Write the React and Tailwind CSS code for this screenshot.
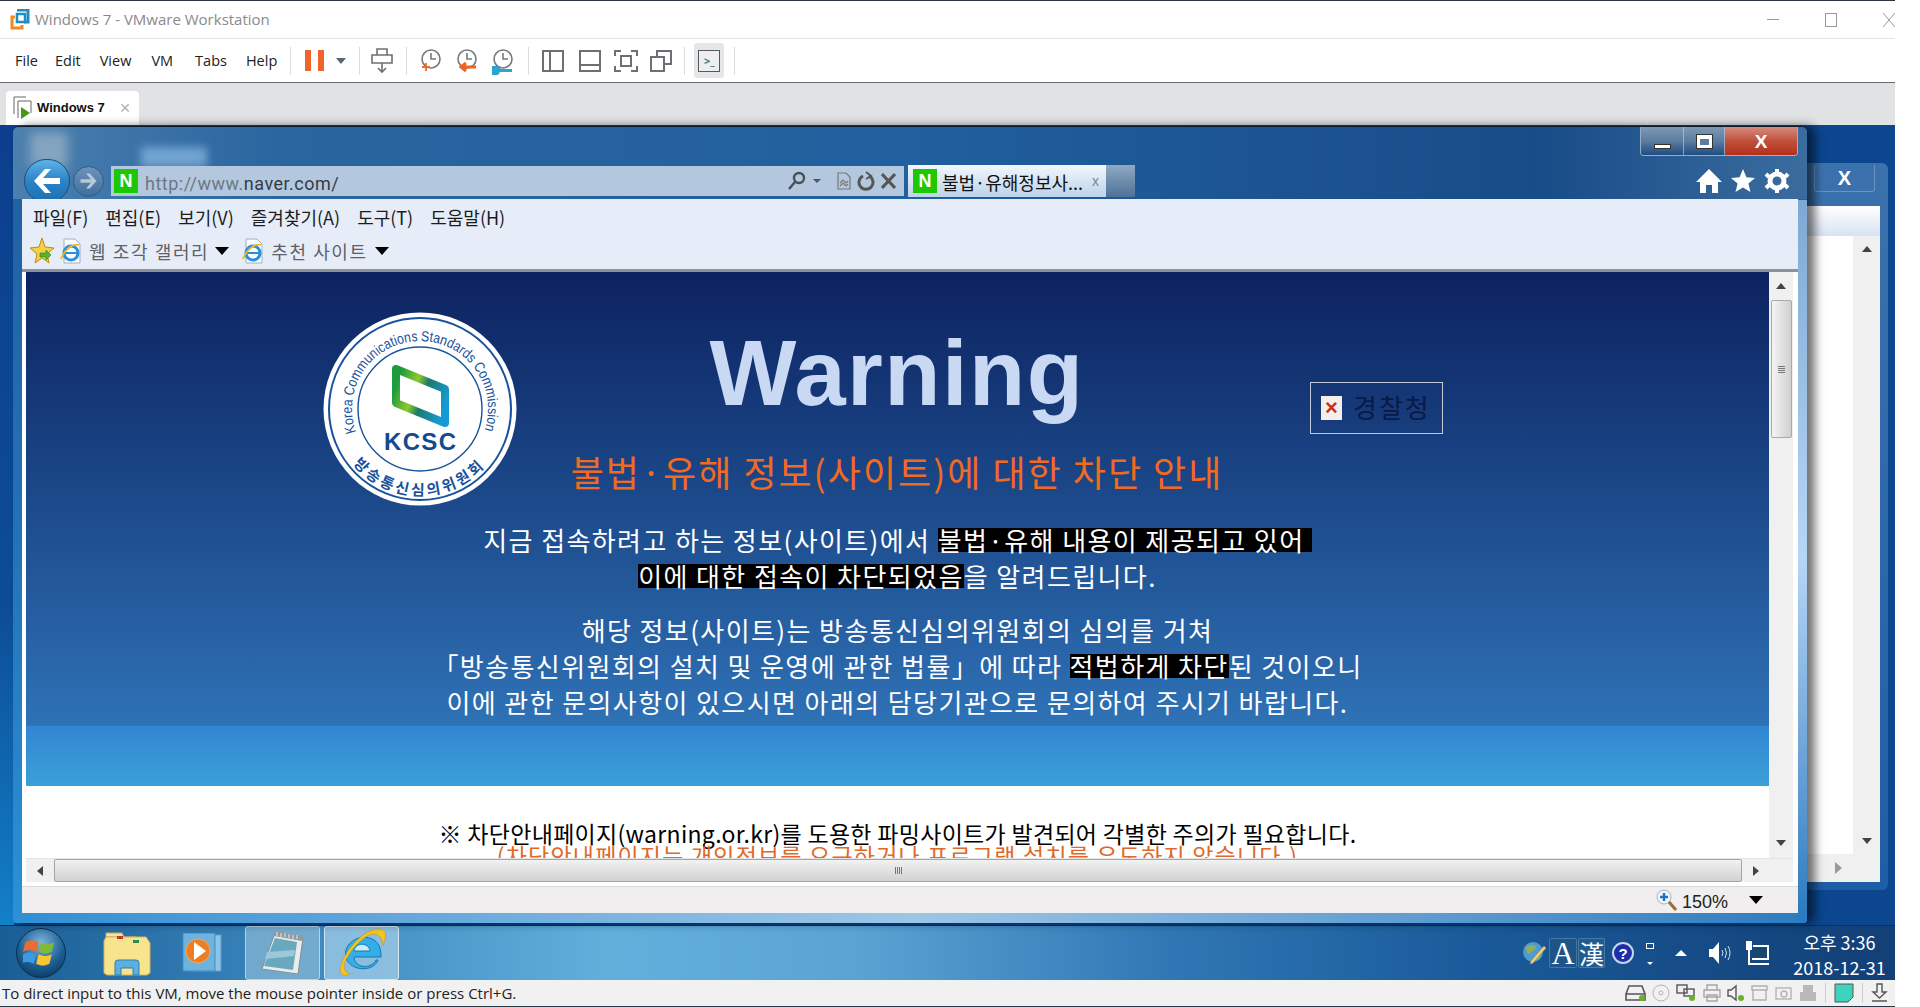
import React from "react";

const KR = "font-['Noto_Sans_CJK_KR','Noto_Sans',sans-serif]";

// ── Small drawn icons ─────────────────────────────────────────────────────────

function VmwareLogo() {
  return (
    <svg width="20" height="21" viewBox="0 0 20 21" fill="none">
      <path d="M7 1h11v12h-4" stroke="#1d8fc4" strokeWidth="3" />
      <rect x="7" y="5" width="8" height="8" stroke="#1d8fc4" strokeWidth="2.500" />
      <path d="M12 16v3H2V8h3" stroke="#ef8a1d" strokeWidth="3" />
    </svg>
  );
}

function Separator() {
  return <div className="h-[28px] w-px bg-[#dcdcdc]" />;
}

function SnapshotIcon({ kind }) {
  return (
    <svg width="24" height="30" viewBox="0 0 24 30" fill="none">
      <circle cx="13" cy="13" r="9" stroke="#77797c" strokeWidth="1.6" />
      <path d="M13 7v6h5" stroke="#77797c" strokeWidth="1.6" />
      {kind === "add" && <path d="M4 21h8M8 17v8" stroke="#ef6c2d" strokeWidth="1.8" />}
      {kind === "back" && <path d="M22 21H8m4-4l-5 4 5 4" stroke="#ef6423" strokeWidth="3" fill="#ef6423" />}
      {kind === "manage" && <path d="M2 20h6l3 3h11v3H10l-2 3H2z" fill="#2aa5cf" />}
    </svg>
  );
}

function LayoutIcon({ kind }) {
  if (kind === "side") {
    return (
      <svg width="22" height="22" fill="none" stroke="#6d6f72" strokeWidth="2">
        <rect x="1" y="1" width="20" height="20" />
        <path d="M8 1v20" />
      </svg>
    );
  }
  if (kind === "bottom") {
    return (
      <svg width="22" height="22" fill="none" stroke="#6d6f72" strokeWidth="2">
        <rect x="1" y="1" width="20" height="20" />
        <path d="M1 15h20" />
      </svg>
    );
  }
  if (kind === "full") {
    return (
      <svg width="24" height="22" fill="none" stroke="#6d6f72" strokeWidth="2">
        <path d="M1 6V1h6M17 1h6v5M1 16v5h6M17 21h6v-5" />
        <rect x="7" y="6" width="10" height="10" />
      </svg>
    );
  }
  return (
    <svg width="22" height="22" fill="none" stroke="#6d6f72" strokeWidth="2">
      <rect x="1" y="7" width="13" height="14" />
      <path d="M7 7V1h14v13h-7" />
    </svg>
  );
}

function NaverIcon({ size = 24 }) {
  return (
    <div
      className="flex shrink-0 items-center justify-center bg-[#1ec800] font-['Liberation_Sans',sans-serif] font-bold text-white"
      style={{ width: size, height: size, fontSize: size * 0.75 }}
    >
      N
    </div>
  );
}

function IeDoc() {
  return (
    <svg width="24" height="26" viewBox="0 0 24 26">
      <path d="M5 1h11l5 5v19H5z" fill="#f8fbff" stroke="#a4aebd" />
      <circle cx="12" cy="15" r="7" fill="none" stroke="#2d8ed8" strokeWidth="3" />
      <path d="M6 15h13" stroke="#2d8ed8" strokeWidth="2" />
      <path d="M2 21C6 11 14 5 20 7" fill="none" stroke="#eeb71f" strokeWidth="1.8" />
    </svg>
  );
}

function FavStar() {
  return (
    <svg width="24" height="28" viewBox="0 0 24 28">
      <path d="M12 1l3 9 9 1-7 6 2 9-7-5-7 5 2-9-7-6 9-1z" fill="#f6d145" stroke="#b98d1c" />
      <path d="M10 16h6v-3l5 5-5 5v-3h-6z" fill="#58b52b" stroke="#2f7d12" strokeWidth=".6" />
    </svg>
  );
}

function Caret() {
  return <div className="h-0 w-0 border-x-[7px] border-t-[8px] border-x-transparent border-t-black" />;
}

function KcscLogo() {
  return (
    <svg width="194" height="194" viewBox="0 0 194 194" className="shrink-0">
      <defs>
        <linearGradient id="kcscMark" x1="0" x2="1" y1="0.3" y2="0.7">
          <stop offset="0" stopColor="#1f9a3c" />
          <stop offset="0.35" stopColor="#8ccb2e" />
          <stop offset="0.55" stopColor="#1c7a6a" />
          <stop offset="1" stopColor="#169ad6" />
        </linearGradient>
        <path id="kcscTop" d="M33 120A68 68 0 1 1 161 120" />
        <path id="kcscBottom" d="M30 152A87 87 0 0 0 164 152" />
      </defs>
      <circle cx="97" cy="97" r="96.500" fill="#fff" />
      <circle cx="97" cy="97" r="91" fill="none" stroke="#17529c" strokeWidth="2" />
      <circle cx="97" cy="97" r="62" fill="none" stroke="#17529c" strokeWidth="1.4" />
      <path d="M73 57L122 77V111L73 91Z" fill="none" stroke="url(#kcscMark)" strokeWidth="8" strokeLinejoin="round" />
      <text x="97" y="138" textAnchor="middle" fontFamily="Liberation Sans" fontWeight="700" fontSize="24" fill="#124a92" textLength="72">
        KCSC
      </text>
      <text fontFamily="Liberation Sans" fontSize="14.5" fill="#17529c">
        <textPath href="#kcscTop" textLength="258" lengthAdjust="spacingAndGlyphs">Korea Communications Standards Commission</textPath>
      </text>
      <text fontFamily="Noto Sans CJK KR" fontWeight="700" fontSize="15" fill="#17529c">
        <textPath href="#kcscBottom" textLength="148">방송통신심의위원회</textPath>
      </text>
    </svg>
  );
}

// ── IE window chrome ──────────────────────────────────────────────────────────

function WindowButtons() {
  return (
    <div className="absolute right-[9px] top-0 flex h-[29px] overflow-hidden rounded-b-[4px] border border-t-0 border-[#c4d0de]/70 text-white">
      <div className="flex w-[43px] items-end justify-center border-r border-[#c4d0de]/60 bg-gradient-to-b from-[#7f98b4] via-[#5b7da0] to-[#1f4d80] pb-[6px]">
        <div className="h-[5px] w-[17px] border border-[#333] bg-white" />
      </div>
      <div className="flex w-[41px] items-center justify-center border-r border-[#c4d0de]/60 bg-gradient-to-b from-[#7f98b4] via-[#5b7da0] to-[#1f4d80]">
        <div className="h-[13px] w-[15px] border-[3px] border-t-[4px] border-white bg-[#5b7da0] outline outline-[#333]" />
      </div>
      <div className="flex w-[72px] items-center justify-center bg-gradient-to-b from-[#d48b7d] via-[#c1503c] to-[#b32f1c] font-['Liberation_Sans',sans-serif] text-[19px] font-bold leading-none">
        X
      </div>
    </div>
  );
}

function AddressBar() {
  return (
    <div className="flex items-center pl-[11px] pt-[8px]">
      {/* back / forward */}
      <div className="flex h-[44px] w-[46px] items-center justify-center rounded-full border border-[#1d4f7e] bg-gradient-to-b from-[#5db2e6] via-[#2c83c6] to-[#1c6fb4]">
        <svg width="30" height="26" viewBox="0 0 30 26"><path d="M13 1L2 13l11 12h6l-8-9h17v-6H11l8-9z" fill="#fff" /></svg>
      </div>
      <div className="ml-[3px] flex h-[31px] w-[31px] items-center justify-center rounded-full border border-[#2d5d8d] bg-gradient-to-b from-[#6f93b9] to-[#3e6e9e]">
        <svg width="19" height="16" viewBox="0 0 30 26"><path d="M17 1l11 12-11 12h-6l8-9H2v-6h17l-8-9z" fill="#b9c9da" /></svg>
      </div>
      <div className="ml-[7px] flex h-[30px] w-[793px] items-center bg-[#b3c8df] pl-[3px] pr-[8px]">
        <NaverIcon />
        <span className="ml-[7px] pt-[4px] font-['Roboto',sans-serif] text-[18px] tracking-[0.5px] text-[#6d7885]">
          http://www.<span className="text-[#333b45]">naver.com/</span>
        </span>
        <div className="ml-auto flex items-center gap-[6px]">
          <svg width="20" height="20" viewBox="0 0 20 20" fill="none" stroke="#4a4f55" strokeWidth="2.400">
            <circle cx="12" cy="7" r="5" />
            <path d="M8 11l-6 7" />
          </svg>
          <div className="mr-[10px] h-0 w-0 border-x-[4px] border-t-[4px] border-x-transparent border-t-[#555]" />
          <svg width="14" height="18" viewBox="0 0 14 18" fill="none" stroke="#777" strokeWidth="1.2">
            <path d="M1 1h8l4 4v12H1zM3 11l3-3 3 3 2-2M3 14l3-3 3 3 2-2" />
          </svg>
          <svg width="18" height="20" viewBox="0 0 18 20" fill="none" stroke="#555" strokeWidth="3">
            <path d="M12 5a7 7 0 1 1-6 0" />
            <path d="M9 1l5 4-5 3" strokeWidth="2" />
          </svg>
          <svg width="15" height="16" viewBox="0 0 15 16" stroke="#555" strokeWidth="3"><path d="M1 1l13 14M14 1L1 15" /></svg>
        </div>
      </div>
      {/* tab */}
      <div className={`ml-[4px] flex h-[32px] w-[198px] items-center bg-gradient-to-b from-[#f2f7fc] to-[#bcd3ea] pl-[5px] pr-[7px] text-[18px] text-[#111] ${KR}`}>
        <NaverIcon />
        <span className="ml-[5px] whitespace-nowrap pt-[2px] leading-none">불법·유해정보사...</span>
        <span className="ml-auto font-['Liberation_Sans',sans-serif] text-[14px] text-[#7a8797]">x</span>
      </div>
      <div className="h-[32px] w-[29px] bg-gradient-to-b from-[#8fa9c4] to-[#4f7297]" />
      {/* home, favourites, tools */}
      <div className="ml-auto mr-[17px] flex items-center gap-[9px]">
        <svg width="26" height="24" viewBox="0 0 26 24" fill="#fff">
          <path d="M13 0L0 13h4v11h6v-8h6v8h6V13h4z" />
        </svg>
        <svg width="24" height="24" viewBox="0 0 24 24" fill="#fff">
          <path d="M12 0l3.4 8.2 8.6.7-6.6 5.7 2.1 8.4L12 18.500l-7.500 4.500 2.100-8.400L0 8.900l8.600-.7z" />
        </svg>
        <svg width="26" height="24" viewBox="0 0 26 24" fill="none" stroke="#fff" strokeWidth="5">
          <circle cx="13" cy="12" r="7" />
          <path d="M13 0v4M13 20v4M2 5l3 3M21 16l3 3M2 19l3-3M21 8l3-3" strokeWidth="4" />
        </svg>
      </div>
    </div>
  );
}

function BrowserMenus() {
  return (
    <div className={`h-[73px] border-b-[3px] border-[#8e9196] bg-[#e6edf8] text-[18px] text-[#1c1c1c] ${KR}`}>
      <div className="flex h-[37px] items-center gap-[17px] pl-[11px]">
        <span>파일(F)</span>
        <span>편집(E)</span>
        <span>보기(V)</span>
        <span>즐겨찾기(A)</span>
        <span>도구(T)</span>
        <span>도움말(H)</span>
      </div>
      <div className="flex h-[30px] items-center pl-[8px] text-[#5e6166]">
        <FavStar />
        <div className="ml-[5px]"><IeDoc /></div>
        <span className="ml-[6px] tracking-[1.6px]">웹 조각 갤러리</span>
        <div className="ml-[6px]"><Caret /></div>
        <div className="ml-[12px]"><IeDoc /></div>
        <span className="ml-[6px] tracking-[1.6px]">추천 사이트</span>
        <div className="ml-[7px]"><Caret /></div>
      </div>
    </div>
  );
}

function ArrowUp() {
  return <div className="h-0 w-0 border-x-[5px] border-b-[6px] border-x-transparent border-b-[#444]" />;
}

function ArrowDown() {
  return <div className="h-0 w-0 border-x-[5px] border-t-[6px] border-x-transparent border-t-[#444]" />;
}

function VScrollbar() {
  return (
    <div className="flex w-[24px] shrink-0 flex-col items-center bg-[#f0f0f0]">
      <div className="flex h-[28px] items-center"><ArrowUp /></div>
      <div className="flex h-[138px] w-[21px] items-center justify-center rounded-[2px] border border-[#a9a9a9] bg-gradient-to-r from-[#f4f4f4] to-[#cfd0d2]">
        <div className="h-[7px] w-[7px] border-y-[3px] border-double border-[#777]" />
      </div>
      <div className="mb-[12px] mt-auto"><ArrowDown /></div>
    </div>
  );
}

function HScrollbar() {
  return (
    <div className="flex h-[24px] shrink-0 items-center border-t border-[#e4e4e4] bg-[#f0f0f0]">
      <div className="flex w-[28px] justify-center">
        <div className="h-0 w-0 border-y-[5px] border-r-[6px] border-y-transparent border-r-[#444]" />
      </div>
      <div className="flex h-[23px] w-[1688px] items-center justify-center rounded-[2px] border border-[#a5a5a5] bg-gradient-to-b from-[#f2f2f2] to-[#d0d1d3]">
        <div className="h-[7px] w-[7px] border-x-[3px] border-double border-[#777]" />
      </div>
      <div className="flex w-[27px] justify-center">
        <div className="h-0 w-0 border-y-[5px] border-l-[6px] border-y-transparent border-l-[#444]" />
      </div>
    </div>
  );
}

// ── Warning page ──────────────────────────────────────────────────────────────

function Mark({ children }) {
  return <span className="inline-block h-[24px] bg-black leading-[24px]">{children}</span>;
}

function WarningPage() {
  return (
    <div className={`h-[586px] min-w-0 flex-1 overflow-hidden bg-white ${KR}`}>
      <div className="h-[454px] bg-gradient-to-b from-[#0d2260] to-[#2f72b6] pt-[40px]">
        <div className="flex items-start pl-[297px]">
          <KcscLogo />
          <div className="w-[760px] shrink-0 text-center">
            <div className="mt-[7px] font-['Liberation_Sans',sans-serif] text-[92px] font-bold leading-[108px] tracking-[1.5px] text-[#c9d8f3]">
              Warning
            </div>
            <div className="mt-[19px] text-[36px] leading-[50px] tracking-[2px] text-[#f26a1f]">
              불법·유해 정보(사이트)에 대한 차단 안내
            </div>
          </div>
          <div className="ml-[33px] mt-[70px] flex h-[52px] w-[133px] items-center border border-[#c3cbdb] pl-[10px]">
            <div className="flex h-[24px] w-[21px] items-center justify-center bg-[#f3efef] font-['Liberation_Sans',sans-serif] text-[22px] font-bold leading-none text-[#d52a1f]">
              ×
            </div>
            <span className="ml-[11px] pb-[3px] text-[26px] leading-none tracking-[2px] text-[#0a1a45]">경찰청</span>
          </div>
        </div>
        <div className="mt-[16px] text-center text-[26px] leading-[36px] tracking-[1.4px] text-white">
          <p>
            지금 접속하려고 하는 정보(사이트)에서 <Mark>불법·유해 내용이 제공되고 있어&nbsp;</Mark>
          </p>
          <p>
            <Mark>이에 대한 접속이 차단되었음</Mark>을 알려드립니다.
          </p>
          <p className="mt-[18px]">해당 정보(사이트)는 방송통신심의위원회의 심의를 거쳐</p>
          <p>
            「방송통신위원회의 설치 및 운영에 관한 법률」에 따라 <Mark>적법하게 차단</Mark>된 것이오니
          </p>
          <p>이에 관한 문의사항이 있으시면 아래의 담당기관으로 문의하여 주시기 바랍니다.</p>
        </div>
      </div>
      <div className="h-[60px] bg-gradient-to-b from-[#3386d2] to-[#3ba0d7]" />
      <div className="pt-[32px] text-center text-[23px] leading-[30px] tracking-[0.3px]">
        <p className="text-black">※ 차단안내페이지(warning.or.kr)를 도용한 파밍사이트가 발견되어 각별한 주의가 필요합니다.</p>
        <p className="mt-[-8px] tracking-[1.2px] text-[#e0692a]">(차단안내페이지는 개인정보를 요구하거나 프로그램 설치를 유도하지 않습니다.)</p>
      </div>
    </div>
  );
}

function IeWindow() {
  return (
    <div className="absolute left-[13px] top-[1px] flex h-[797px] w-[1794px] flex-col overflow-hidden rounded-t-[6px] rounded-b-[4px] border-t border-[#0a1a30] bg-gradient-to-b from-[#1f5f9f] via-[#2471b5] to-[#2a92d8] shadow-[8px_0_10px_rgba(0,0,0,0.55)]">
      <div className="relative h-[72px] shrink-0 bg-[linear-gradient(90deg,#4b7fae_0%,#2a659f_15%,#215f9e_50%,#184c88_85%,#3a6c9e_100%)]">
        {/* blurred windows showing through the glass */}
        <div className="absolute left-[17px] top-[5px] h-[36px] w-[38px] bg-[#c4cfd6]/50 blur-[6px]" />
        <div className="absolute left-[128px] top-[20px] h-[20px] w-[66px] bg-[#7fb0dc]/80 blur-[4px]" />
        <WindowButtons />
        <div className="relative pt-[24px]">
          <AddressBar />
        </div>
      </div>
      <div className="relative mx-[9px] flex flex-1 flex-col bg-white">
        <BrowserMenus />
        <div className="flex flex-col pl-[4px] pr-[5px]">
          <div className="flex">
            <WarningPage />
            <VScrollbar />
          </div>
          <HScrollbar />
        </div>
        <div className="mt-[4px] flex h-[27px] items-center justify-end border-t border-[#d8d8d8] bg-[#f0eeee] pr-[2px] font-['Liberation_Sans',sans-serif] text-[18px] text-[#222]">
          <svg width="22" height="23" viewBox="0 0 22 23" fill="none">
            <circle cx="8" cy="8" r="7" fill="#eef5fc" stroke="#9db4c9" />
            <path d="M4 8h8M8 4v8" stroke="#1f74bb" strokeWidth="2.400" />
            <path d="M13 13l7 8" stroke="#a26a2c" strokeWidth="3" />
          </svg>
          <span className="ml-[4px] w-[67px] pt-[4px]">150%</span>
          <div className="mr-[33px]"><Caret /></div>
        </div>
      </div>
      {/* pale right edge of the frame */}
      <div className="absolute bottom-[10px] right-0 top-[73px] w-[9px] bg-gradient-to-b from-[#7ea9d4] via-[#b7d6f6] to-[#2b7cc0]" />
      <div className="h-[10px] shrink-0 bg-gradient-to-r from-[#2d8fd5] via-[#9cc6e6] to-[#2b7cc0]" />
    </div>
  );
}

function BackWindow() {
  return (
    <div className="absolute left-[1700px] top-[38px] flex h-[727px] w-[188px] flex-col rounded-[6px] bg-gradient-to-b from-[#3b72ad] to-[#1e5ea6]">
      <div className="flex h-[43px] shrink-0 justify-end pr-[13px] pt-[2px]">
        <div className="flex h-[27px] w-[61px] items-center justify-center rounded-b-[3px] border border-t-0 border-[#9ab5d1]/50 font-['Liberation_Sans',sans-serif] text-[20px] font-bold text-white">
          X
        </div>
      </div>
      <div className="mb-[8px] ml-[100px] mr-[8px] flex flex-1 flex-col bg-white">
        <div className="h-[30px] bg-gradient-to-b from-white to-[#d8e3f2]" />
        <div className="flex flex-1 justify-end">
          <div className="flex w-[27px] flex-col items-center justify-between bg-[#f0f0f0] py-[10px]">
            <ArrowUp />
            <ArrowDown />
          </div>
        </div>
        <div className="flex h-[28px] items-center justify-end bg-[#f0f0f0] pr-[38px]">
          <div className="h-0 w-0 border-y-[6px] border-l-[7px] border-y-transparent border-l-[#999]" />
        </div>
      </div>
    </div>
  );
}

// ── Taskbar ───────────────────────────────────────────────────────────────────

function StartOrb() {
  return (
    <div className="flex h-[50px] w-[50px] items-center justify-center rounded-full border border-[#0b2f50] bg-[radial-gradient(circle_at_50%_30%,#7fb6dc,#1b5e92_55%,#0a2a4a)]">
      <svg width="36" height="34" viewBox="0 0 30 28">
        <path d="M2 5c4-2 7-2 11 0l-2 8c-4-2-7-2-11 0z" fill="#ed6b2b" />
        <path d="M15 5c4 2 7 2 11 0l-2 8c-4 2-7 2-11 0z" fill="#7fb93a" />
        <path d="M0 15c4-2 7-2 11 0l-2 8c-4-2-7-2-11 0z" fill="#3b9ae0" />
        <path d="M13 15c4 2 7 2 11 0l-2 8c-4 2-7 2-11 0z" fill="#f7c732" />
      </svg>
    </div>
  );
}

function FolderIcon() {
  return (
    <svg width="48" height="48" viewBox="0 0 48 48">
      <path d="M3 4h16l2 4h-18z" fill="#f3e4a0" stroke="#c9ab55" />
      <path d="M17 8h16v4H17z" fill="#f6e9ad" stroke="#c9ab55" />
      <path d="M1 12l2-4h40l4 6v30l-3 2H4l-3-2z" fill="#f7e48c" stroke="#d2b45e" />
      <rect x="14" y="7" width="6" height="3" fill="#c0392b" />
      <rect x="30" y="11" width="6" height="3" fill="#2d8a4c" />
      <path d="M12 46V34a3 3 0 0 1 3-3h18a3 3 0 0 1 3 3v12h-6v-7H18v7z" fill="#5cb0e0" stroke="#2f7fb6" />
    </svg>
  );
}

function MediaIcon() {
  return (
    <svg width="40" height="40" viewBox="0 0 40 40">
      <rect x="8" y="2" width="31" height="36" fill="#8cc3e6" stroke="#5c9dc9" />
      <rect x="1" y="0" width="32" height="38" fill="#6eb2de" stroke="#3f8fc4" />
      <circle cx="16" cy="18" r="12" fill="#ef7d22" stroke="#f6a962" />
      <path d="M12 9l12 9-12 9z" fill="#fff" />
    </svg>
  );
}

function NotepadIcon() {
  return (
    <svg width="50" height="46" viewBox="0 0 50 46">
      <path d="M17 3l28 5-5 36-36-5z" fill="#e9ecea" stroke="#7c8f98" />
      <path d="M17 8l22 4-4 28L6 36z" fill="#69a9bf" />
      <path d="M9 22l28-2-1 6-29 3z" fill="#9cc9d8" />
      <path d="M17 1l28 5-1 5-28-5z" fill="#8f9aa0" />
      <path d="M19 2v4M23 3v4M27 3v4M31 4v4M35 5v4M39 5v4" stroke="#e8e8e8" />
    </svg>
  );
}

function IeLogo() {
  return (
    <svg width="50" height="50" viewBox="0 0 50 50" fill="none">
      <path d="M41 32C37 44 14 44 9 30 5 15 24 4 37 12c6 4 7 10 7 17H17c1 12 18 12 22 3z" fill="#35aee5" stroke="#1478b4" />
      <path d="M17 23h16c-1-9-15-9-16 0z" fill="#c9ecfb" stroke="#1478b4" />
      <path d="M4 45C-1 34 24 0 42 1c8 0 8 7 4 16-1-7-4-11-9-11C26 6 8 28 7 38c0 4 2 7 6 8-4 2-7 2-9-1z" fill="#f2c522" stroke="#c9931a" strokeWidth=".6" />
    </svg>
  );
}

function Tray() {
  return (
    <div className="ml-auto flex h-full items-center text-white">
      <svg width="24" height="24" viewBox="0 0 24 24" className="ml-[-1px]">
        <circle cx="10" cy="11" r="10" fill="#4f9bd0" />
        <path d="M3 6c4-3 8-3 10 0-1 4-5 3-6 7-3 0-4-3-4-7zM12 14c3-1 5 0 5 3-2 2-4 2-5 1z" fill="#8eb05c" />
        <path d="M23 7L10 22l-3 1 1-3L21 5z" fill="#f2d17a" stroke="#a78a42" strokeWidth=".6" />
      </svg>
      <div className="ml-[2px] flex h-[30px] w-[28px] items-center justify-center rounded-[2px] border border-[#5f8fb5]/60 bg-[#1e5487] font-['Liberation_Serif',serif] text-[32px] leading-none">A</div>
      <div className={`ml-[1px] flex h-[30px] w-[27px] items-center justify-center rounded-[2px] border border-[#5f8fb5]/60 bg-[#215a8f] text-[25px] leading-none ${KR}`}>漢</div>
      <div className="ml-[7px] flex h-[22px] w-[22px] items-center justify-center rounded-full border-2 border-[#c9d7ee] bg-[#1c2fa8] font-['Liberation_Sans',sans-serif] text-[15px] font-bold leading-none">?</div>
      <div className="ml-[11px] flex h-[24px] w-[9px] flex-col items-center justify-between">
        <div className="mt-[2px] h-[6px] w-[8px] border border-white" />
        <div className="h-0 w-0 border-x-[3px] border-t-[3px] border-x-transparent border-t-white" />
      </div>
      <div className="ml-[21px] h-0 w-0 border-x-[6px] border-b-[6px] border-x-transparent border-b-white" />
      <svg width="24" height="24" viewBox="0 0 24 24" fill="none" className="ml-[21px]">
        <path d="M1 8h4l6-7v22l-6-7H1z" fill="#fff" />
        <path d="M14 9q2 3 0 6M17 7q3 5 0 10M20 5q4 7 0 14" stroke="#cfe0ee" />
      </svg>
      <svg width="24" height="24" viewBox="0 0 24 24" fill="none" className="ml-[13px]">
        <rect x="1" y="0" width="6" height="9" fill="#fff" />
        <path d="M4 9v14h20M8 5h15v13H7" stroke="#fff" strokeWidth="2" />
        <rect x="9" y="7" width="13" height="9" fill="#17466f" />
      </svg>
      <div className={`ml-[22px] w-[97px] pt-[3px] text-center text-[18px] leading-[25px] ${KR}`}>
        <div>오후 3:36</div>
        <div>2018-12-31</div>
      </div>
      <div className="w-[7px]" />
    </div>
  );
}

function Taskbar() {
  return (
    <div className="flex h-[55px] shrink-0 items-center border-t border-[#0d3157] bg-[linear-gradient(90deg,#1a5e96_0%,#3a86bd_15%,#62afdc_32%,#5aa4d4_45%,#2f77b4_62%,#1a5a9a_78%,#123f76_100%)] pl-[16px]">
      <StartOrb />
      <div className="ml-[37px]"><FolderIcon /></div>
      <div className="ml-[31px]"><MediaIcon /></div>
      <div className="ml-[23px] flex h-[54px] w-[75px] items-center justify-center rounded-[3px] border border-[#b5d2e6] bg-[#8ab9d6]/70">
        <NotepadIcon />
      </div>
      <div className="ml-[4px] flex h-[54px] w-[75px] items-center justify-center rounded-[3px] border border-[#d4e6f2] bg-[#a9d0ea]/70">
        <IeLogo />
      </div>
      <Tray />
    </div>
  );
}

// ── VMware status icons ───────────────────────────────────────────────────────

function DeviceIcons() {
  return (
    <div className="ml-auto flex items-center gap-[6px] pr-[7px]">
      <svg width="21" height="18" fill="none" stroke="#555"><path d="M1 10L4 2h13l3 8v6H1zM1 10h19" strokeWidth="1.6" /><circle cx="17" cy="14" r="3" fill="#69b02f" stroke="none" /></svg>
      <svg width="18" height="18" fill="none" stroke="#b5b5b5"><circle cx="9" cy="9" r="8" /><circle cx="9" cy="9" r="2" /></svg>
      <svg width="21" height="18" fill="none" stroke="#555" strokeWidth="1.4"><rect x="1" y="1" width="10" height="8" /><rect x="8" y="5" width="10" height="7" /><circle cx="16" cy="14" r="3" fill="#69b02f" stroke="none" /></svg>
      <svg width="18" height="18" fill="none" stroke="#a5a5a5" strokeWidth="1.4"><path d="M4 6V1h10v5M1 6h16v7H1zM4 11h10v6H4z" /></svg>
      <svg width="18" height="18" fill="none" stroke="#555" strokeWidth="1.4"><path d="M1 6h3l5-4v14l-5-4H1z" /><circle cx="14" cy="14" r="3" fill="#69b02f" stroke="none" /></svg>
      <svg width="18" height="18" fill="none" stroke="#b0b0b0" strokeWidth="1.4"><path d="M1 2h15v4H1zM2 6v10h13V6" /></svg>
      <svg width="18" height="18" fill="none" stroke="#b5b5b5" strokeWidth="1.4"><rect x="1" y="4" width="15" height="11" /><circle cx="9" cy="10" r="3" /></svg>
      <svg width="18" height="18"><path d="M4 1h10v7h3v9H1V8h3z" fill="#b9b9b9" /></svg>
      <div className="mx-[2px] h-[20px] w-px bg-[#cfcfcf]" />
      <svg width="20" height="20"><path d="M1 1h18v13l-5 5H1z" fill="#3ed3bd" stroke="#555" /></svg>
      <div className="mx-[2px] h-[20px] w-px bg-[#cfcfcf]" />
      <svg width="17" height="20" fill="none" stroke="#555" strokeWidth="1.4"><path d="M6 1h5v8h4l-6.500 6L2 9h4zM1 18h15" /></svg>
    </div>
  );
}

export default function App() {
  return (
    <div className="h-[1007px] w-[1920px] overflow-hidden bg-white font-['Liberation_Sans',sans-serif]">
      <div className="flex h-full w-[1895px] flex-col border-b border-t border-[#2b3440]">
        {/* VMware title bar */}
        <div className="flex h-[37px] shrink-0 items-center pl-[10px]">
          <VmwareLogo />
          <span className="ml-[5px] font-['Open_Sans',sans-serif] text-[15px] text-[#8a8a8a]">Windows 7 - VMware Workstation</span>
          <div className="ml-auto flex items-center text-[#9a9a9a]">
            <div className="h-px w-[12px] bg-[#9a9a9a]" />
            <div className="ml-[46px] h-[14px] w-[12px] border border-[#9a9a9a]" />
            <svg width="12" height="14" viewBox="0 0 12 14" className="ml-[46px]" stroke="#9a9a9a"><path d="M0 0l12 14M12 0L0 14" /></svg>
          </div>
        </div>
        {/* VMware toolbar */}
        <div className="flex h-[45px] shrink-0 items-center border-y border-b-[#6b6d70] border-t-[#e4e4e4] pl-[15px] font-['Open_Sans',sans-serif] text-[14.5px] text-[#222]">
          <span>File</span>
          <span className="ml-[17px]">Edit</span>
          <span className="ml-[19px]">View</span>
          <span className="ml-[20px]">VM</span>
          <span className="ml-[22px]">Tabs</span>
          <span className="ml-[19px]">Help</span>
          <div className="ml-[13px]"><Separator /></div>
          <div className="ml-[14px] flex gap-[7px]">
            <div className="h-[21px] w-[6px] bg-[#f0642a]" />
            <div className="h-[21px] w-[6px] bg-[#f0642a]" />
          </div>
          <div className="ml-[12px] h-0 w-0 border-x-[5px] border-t-[6px] border-x-transparent border-t-[#5b6570]" />
          <div className="ml-[13px]"><Separator /></div>
          <svg width="22" height="26" viewBox="0 0 22 26" fill="none" stroke="#6d6f72" strokeWidth="1.6" className="ml-[11px]">
            <path d="M6 1h10v6H6zM1 7h20v8H1zM11 15v9M7 20l4 4 4-4" />
          </svg>
          <div className="ml-[13px]"><Separator /></div>
          <div className="ml-[11px]"><SnapshotIcon kind="add" /></div>
          <div className="ml-[12px]"><SnapshotIcon kind="back" /></div>
          <div className="ml-[12px]"><SnapshotIcon kind="manage" /></div>
          <div className="ml-[14px]"><Separator /></div>
          <div className="ml-[13px]"><LayoutIcon kind="side" /></div>
          <div className="ml-[15px]"><LayoutIcon kind="bottom" /></div>
          <div className="ml-[13px]"><LayoutIcon kind="full" /></div>
          <div className="ml-[12px]"><LayoutIcon kind="copy" /></div>
          <div className="ml-[12px]"><Separator /></div>
          <div className="ml-[9px] flex h-[35px] w-[30px] items-center justify-center rounded-[3px] bg-[#e4e6e8]">
            <div className="flex h-[22px] w-[22px] items-center justify-center border border-[#55585c] bg-[#eceef0] text-[11px] font-bold leading-none text-[#3a6f7d]">
              &gt;_
            </div>
          </div>
          <div className="ml-[10px]"><Separator /></div>
        </div>
        {/* VM tabs */}
        <div className="flex h-[42px] shrink-0 items-end bg-[#e1e2e4] pl-[6px]">
          <div className="flex h-[34px] w-[133px] items-center rounded-t-[4px] bg-white pl-[7px]">
            <svg width="20" height="24" viewBox="0 0 20 24" fill="none">
              <path d="M1 18V1h12" stroke="#666" />
              <path d="M5 22V5h13v12" stroke="#666" />
              <path d="M8 11l9 6-9 6z" fill="#3f9a1c" />
            </svg>
            <span className="ml-[4px] text-[13px] font-bold text-[#111]">Windows 7</span>
            <span className="ml-[15px] text-[18px] leading-none text-[#b0b0b0]">×</span>
          </div>
        </div>
        {/* Guest desktop */}
        <div className="relative min-h-0 flex-1 bg-[#0b468e]">
          <div className="absolute bottom-0 left-0 top-0 w-[14px] bg-[linear-gradient(180deg,#0b3f8d_0%,#0c4c96_60%,#1280c8_100%)]" />
          <BackWindow />
          <IeWindow />
        </div>
        <Taskbar />
        {/* VMware status bar */}
        <div className="flex h-[26px] shrink-0 items-center bg-[#f1f1f1] pl-[2px] font-['Open_Sans',sans-serif] text-[15px] text-[#222]">
          <span>To direct input to this VM, move the mouse pointer inside or press Ctrl+G.</span>
          <DeviceIcons />
        </div>
      </div>
    </div>
  );
}
